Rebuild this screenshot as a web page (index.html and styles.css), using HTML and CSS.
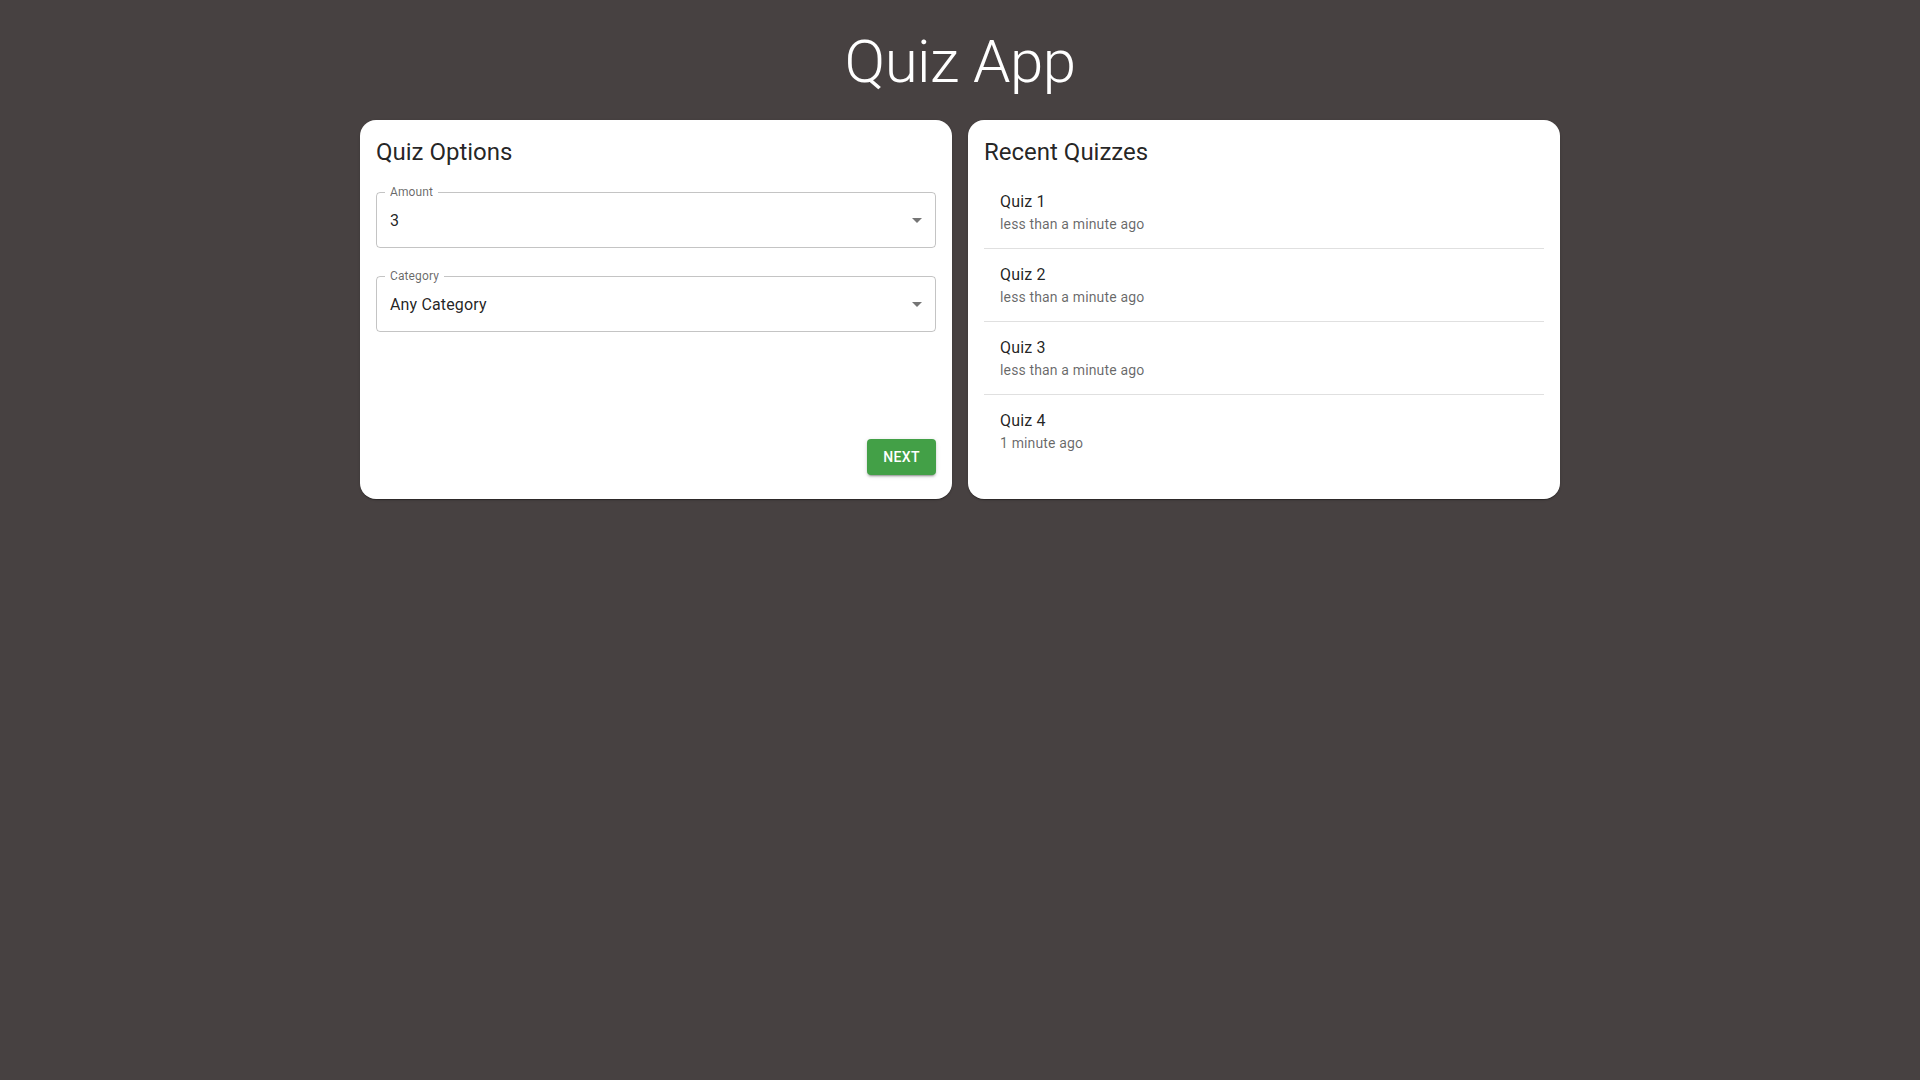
FILE: index.html
```html
<!DOCTYPE html>
<html lang="en">
<head>
<meta charset="utf-8">
<title>Quiz App</title>
<link rel="stylesheet" href="styles.css">
</head>
<body>
<div class="page">
  <h1 class="app-title">Quiz App</h1>
  <div class="grid">
    <section class="card card-options">
      <h2 class="card-title">Quiz Options</h2>
      <div class="field field-first">
        <span class="field-label">Amount</span>
        <div class="field-value">3</div>
        <svg class="field-arrow" viewBox="0 0 24 24" aria-hidden="true"><path d="M7 10l5 5 5-5z"/></svg>
      </div>
      <div class="field field-second">
        <span class="field-label">Category</span>
        <div class="field-value">Any Category</div>
        <svg class="field-arrow" viewBox="0 0 24 24" aria-hidden="true"><path d="M7 10l5 5 5-5z"/></svg>
      </div>
      <div class="actions">
        <button class="btn-next" type="button">Next</button>
      </div>
    </section>
    <section class="card">
      <h2 class="card-title">Recent Quizzes</h2>
      <ul class="quiz-list">
        <li class="quiz-item">
          <div class="quiz-name">Quiz 1</div>
          <div class="quiz-time">less than a minute ago</div>
        </li>
        <li class="quiz-item">
          <div class="quiz-name">Quiz 2</div>
          <div class="quiz-time">less than a minute ago</div>
        </li>
        <li class="quiz-item">
          <div class="quiz-name">Quiz 3</div>
          <div class="quiz-time">less than a minute ago</div>
        </li>
        <li class="quiz-item">
          <div class="quiz-name">Quiz 4</div>
          <div class="quiz-time">1 minute ago</div>
        </li>
      </ul>
    </section>
  </div>
</div>
</body>
</html>
```
FILE: styles.css
```css
* { box-sizing: border-box; }

html, body {
  margin: 0;
  padding: 0;
}

body {
  background: #474141;
  font-family: Roboto, "Liberation Sans", Arial, sans-serif;
  color: rgba(0, 0, 0, 0.87);
  min-height: 100vh;
}

.page {
  width: 1200px;
  margin: 0 auto;
  padding-top: 26px;
}

.app-title {
  margin: 0 0 22px;
  font-family: Roboto, sans-serif;
  font-weight: 300;
  font-size: 60px;
  line-height: 1.2;
  letter-spacing: -0.00833em;
  text-align: center;
  color: #ffffff;
}

.grid {
  display: grid;
  grid-template-columns: 1fr 1fr;
  gap: 16px;
  align-items: stretch;
}

.card {
  background: #ffffff;
  border-radius: 16px;
  padding: 16px 16px 24px;
  box-shadow: 0 2px 1px -1px rgba(0,0,0,0.2), 0 1px 1px 0 rgba(0,0,0,0.14), 0 1px 3px 0 rgba(0,0,0,0.12);
  display: flex;
  flex-direction: column;
}

.card-title {
  margin: 0 0 8px;
  font-size: 24px;
  font-weight: 400;
  line-height: 1.334;
  letter-spacing: 0;
  color: rgba(0, 0, 0, 0.87);
}

.field {
  position: relative;
  height: 56px;
  border: 1px solid rgba(0, 0, 0, 0.23);
  border-radius: 4px;
  display: flex;
  align-items: center;
  padding: 0 32px 0 13px;
}

.field-first { margin-top: 16px; }
.field-second { margin-top: 28px; }

.field-label {
  position: absolute;
  left: 8px;
  top: -8px;
  padding: 0 5px;
  background: #ffffff;
  font-size: 12px;
  line-height: 14px;
  color: rgba(0, 0, 0, 0.6);
  letter-spacing: 0.01em;
}

.field-value {
  font-size: 16px;
  line-height: 19px;
  letter-spacing: 0.00938em;
  color: rgba(0, 0, 0, 0.87);
}

.field-arrow {
  position: absolute;
  right: 6px;
  top: calc(50% - 12px);
  width: 24px;
  height: 24px;
  fill: rgba(0, 0, 0, 0.54);
}

.actions {
  margin-top: auto;
  display: flex;
  justify-content: flex-end;
}

.btn-next {
  font-family: Roboto, sans-serif;
  font-size: 14px;
  font-weight: 500;
  line-height: 1.75;
  letter-spacing: 0.02857em;
  text-transform: uppercase;
  color: #ffffff;
  background: #43a047;
  border: 0;
  border-radius: 4px;
  padding: 6px 16px;
  min-width: 64px;
  box-shadow: 0 3px 1px -2px rgba(0,0,0,0.2), 0 2px 2px 0 rgba(0,0,0,0.14), 0 1px 5px 0 rgba(0,0,0,0.12);
  cursor: pointer;
}

.quiz-list {
  list-style: none;
  margin: 0;
  padding: 0 0 8px;
}

.quiz-item {
  padding: 14px 16px;
  border-bottom: 1px solid rgba(0, 0, 0, 0.12);
}

.quiz-item:last-child {
  border-bottom: 0;
}

.quiz-name {
  font-size: 16px;
  line-height: 24px;
  letter-spacing: 0.00938em;
  color: rgba(0, 0, 0, 0.87);
}

.quiz-time {
  font-size: 14px;
  line-height: 20px;
  letter-spacing: 0.01071em;
  color: rgba(0, 0, 0, 0.6);
}
```
